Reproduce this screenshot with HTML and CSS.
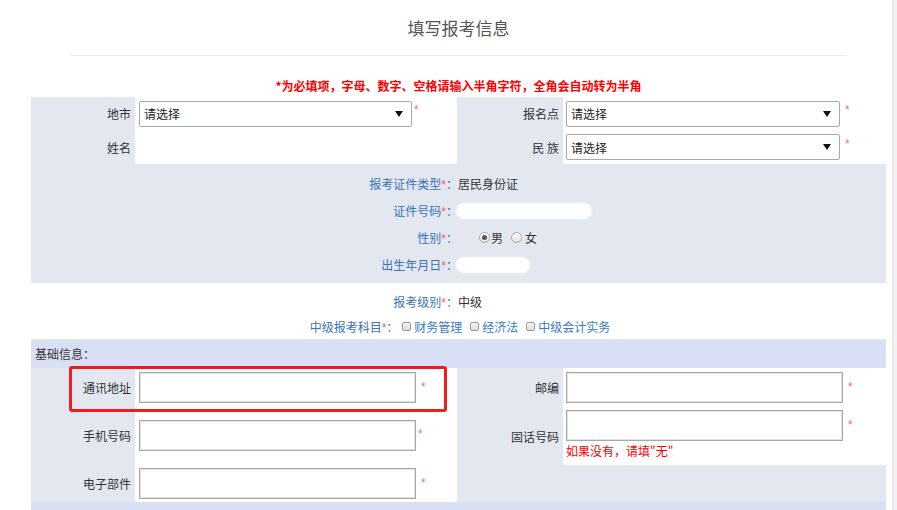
FILE: index.html
```html
<!DOCTYPE html>
<html lang="zh-CN">
<head>
<meta charset="utf-8">
<title>填写报考信息</title>
<link rel="stylesheet" href="styles.css">
</head>
<body>
<div class="layout">
  <main class="page">
    <div class="sheet">
      <h1 class="title">填写报考信息</h1>
      <div class="rule"></div>
      <p class="notice">*为必填项，字母、数字、空格请输入半角字符，全角会自动转为半角</p>

      <div class="grid-top">
        <div class="lab">地市</div>
        <div class="val val-l"><div class="select"><span>请选择</span><svg class="arrow" width="8" height="6" viewBox="0 0 8 6"><path d="M0 0H8L4 6Z" fill="#111"/></svg></div><span class="star star-tight">*</span></div>
        <div class="lab">报名点</div>
        <div class="val val-r"><div class="select"><span>请选择</span><svg class="arrow" width="8" height="6" viewBox="0 0 8 6"><path d="M0 0H8L4 6Z" fill="#111"/></svg></div><span class="star">*</span></div>
        <div class="lab">姓名</div>
        <div class="val val-l"></div>
        <div class="lab">民 族</div>
        <div class="val val-r"><div class="select"><span>请选择</span><svg class="arrow" width="8" height="6" viewBox="0 0 8 6"><path d="M0 0H8L4 6Z" fill="#111"/></svg></div><span class="star">*</span></div>
      </div>

      <div class="id-block">
        <div class="pair"><div class="k">报考证件类型<span class="req">*</span>：</div><div class="v">居民身份证</div></div>
        <div class="pair"><div class="k">证件号码<span class="req">*</span>：</div><div class="v"><span class="mask mask-id"></span></div></div>
        <div class="pair"><div class="k">性别<span class="req">*</span>：</div><div class="v"><span class="radio checked"></span><span class="opt">男</span><span class="radio radio-2"></span><span class="opt">女</span></div></div>
        <div class="pair"><div class="k">出生年月日<span class="req">*</span>：</div><div class="v"><span class="mask mask-date"></span></div></div>
      </div>

      <div class="level-block">
        <div class="pair pair-s"><div class="k">报考级别<span class="req">*</span>：</div><div class="v">中级</div></div>
        <div class="subjects">
          <span class="k-inline">中级报考科目<span class="req">*</span>：</span>
          <span class="check"></span><span class="subj">财务管理</span>
          <span class="check"></span><span class="subj">经济法</span>
          <span class="check"></span><span class="subj">中级会计实务</span>
        </div>
      </div>

      <div class="section-head">基础信息：</div>

      <div class="basic">
        <div class="half-left">
          <div class="brow brow-a">
            <div class="blab">通讯地址</div>
            <div class="bval"><span class="text-input"></span><span class="star bstar">*</span></div>
          </div>
          <div class="brow brow-b">
            <div class="blab">手机号码</div>
            <div class="bval"><span class="text-input"></span><span class="star bstar star-near">*</span></div>
          </div>
          <div class="brow brow-c">
            <div class="blab">电子部件</div>
            <div class="bval"><span class="text-input"></span><span class="star bstar">*</span></div>
          </div>
        </div>
        <div class="half-right">
          <div class="rlab">邮编</div>
          <div class="rval rval-zip"><span class="text-input"></span><span class="star bstar">*</span></div>
          <div class="rlab">固话号码</div>
          <div class="rval rval-tel">
            <div class="tel-line"><span class="text-input"></span><span class="star bstar">*</span></div>
            <div class="hint">如果没有，请填"无"</div>
          </div>
          <div class="filler"></div>
        </div>
        <div class="highlight"></div>
      </div>

      <div class="section-head section-next"></div>
    </div>
  </main>
  <div class="scrollbar"></div>
</div>
</body>
</html>
```

FILE: styles.css
```css
* { box-sizing: border-box; }
html, body { margin: 0; padding: 0; }
body {
  font-family: "Noto Sans CJK SC", "Liberation Sans", sans-serif;
  font-size: 12px;
  color: #333;
  background: #fff;
}
.layout { display: flex; height: 510px; overflow: hidden; }
.page { width: 892px; flex: none; }
.scrollbar { flex: 1; background: #f1f1f1; border-left: 1px solid #e4e4e4; }
.sheet { margin-left: 31px; width: 855px; }

.title {
  margin: 0;
  padding-top: 16px;
  height: 40px;
  line-height: 24px;
  font-size: 17px;
  font-weight: normal;
  color: #555;
  text-align: center;
}
.rule { margin: 15px 39px 0; height: 1px; background: #ececec; }
.notice {
  margin: 22px 0 3px;
  line-height: 16px;
  height: 16px;
  text-align: center;
  color: #ff0000;
  font-weight: bold;
  font-size: 12px;
}

/* top grid */
.grid-top {
  display: grid;
  grid-template-columns: 104px 322px 106px 323px;
  grid-template-rows: 33px 34px;
}
.lab {
  background: #e3e7ef;
  display: flex;
  align-items: center;
  justify-content: flex-end;
  padding-right: 4px;
}
.val { background: #fff; display: flex; align-items: center; }
.val-l { padding-left: 4px; }
.val-r { padding-left: 3px; }
.select {
  width: 273px;
  height: 26px;
  border: 1px solid #a9a9a9;
  border-radius: 2px;
  display: flex;
  align-items: center;
  justify-content: space-between;
  padding: 0 8px 0 4px;
  background: #fff;
  color: #222;
}
.val-r .select { width: 274px; }
.arrow { display: block; }

.star {
  color: #ff6b6b;
  font-size: 12px;
  line-height: 12px;
  margin-left: 5px;
  margin-bottom: 7px;
  font-family: "Liberation Sans", sans-serif;
}
.star-tight { margin-left: 2px; }
.req { color: #ff5a5a; font-family: "Liberation Sans", sans-serif; }

/* id block */
.id-block { background: #e3e7ef; padding: 6px 0 5px; }
.pair {
  display: grid;
  grid-template-columns: 427px 1fr;
  height: 27px;
  align-items: center;
}
.pair .k { text-align: right; color: #3a74ba; }
.pair .v { color: #333; display: flex; align-items: center; }
.mask {
  display: inline-block;
  height: 14px;
  background: #fff;
  border-radius: 7px;
  box-shadow: 0 0 2px 1px #fff;
  margin-left: -1px;
}
.mask-id { width: 134px; }
.mask-date { width: 72px; }
.radio {
  display: inline-block;
  width: 11px;
  height: 11px;
  border-radius: 50%;
  border: 1px solid #a8a8a8;
  background: linear-gradient(#fdfdfd, #e2e2e2);
  margin-left: 21px;
  margin-right: 1px;
  position: relative;
}
.radio.checked::after {
  content: "";
  position: absolute;
  left: 2px;
  top: 2px;
  width: 5px;
  height: 5px;
  border-radius: 50%;
  background: #555;
}
.radio-2 { margin-left: 8px; margin-right: 3px; }
.opt { color: #333; }

/* level block */
.level-block { background: #fff; padding-top: 6px; border-bottom: 1px solid #e8e8e8; }
.pair-s { height: 25px; }
.subjects {
  height: 25px;
  display: flex;
  align-items: center;
  justify-content: center;
  padding-left: 3px;
}
.k-inline { color: #3a74ba; margin-right: 4px; }
.subj { color: #3a7bc6; margin-right: 8px; }
.subj:last-child { margin-right: 0; }
.check {
  display: inline-block;
  width: 9px;
  height: 9px;
  border: 1px solid #9a9a9a;
  border-radius: 2px;
  background: linear-gradient(#f6f6f6, #dcdcdc);
  margin-right: 3px;
}

.section-head {
  background: #d9e0f6;
  height: 28px;
  line-height: 28px;
  padding-left: 4px;
  color: #333;
}
.section-next { height: 30px; }

/* basic info */
.basic {
  display: grid;
  grid-template-columns: 426px 429px;
  position: relative;
}
.brow { display: grid; grid-template-columns: 104px 322px; }
.brow-a, .brow-b { height: 48px; }
.brow-c { height: 38px; }
.blab {
  background: #e3e7ef;
  text-align: right;
  padding: 4px 4px 0 0;
  line-height: 31px;
}
.bval {
  background: #fff;
  padding: 4px 0 0 4px;
  display: flex;
  align-items: flex-start;
}
.text-input {
  display: block;
  width: 277px;
  height: 31px;
  border: 1px solid #a8a8a8;
  box-shadow: inset 0 0 0 1px #e2e2e2;
  background: #fff;
  flex: none;
}
.bstar { margin-top: 9px; margin-left: 5px; margin-bottom: 0; }
.star-near { margin-left: 2px; margin-top: 8px; }

.half-right {
  display: grid;
  grid-template-columns: 106px 323px;
  grid-template-rows: 39px 58px 37px;
}
.rlab {
  background: #e3e7ef;
  display: flex;
  align-items: center;
  justify-content: flex-end;
  padding-right: 4px;
}
.rval { background: #fff; padding-left: 3px; }
.rval-zip { padding-top: 4px; display: flex; align-items: flex-start; }
.rval-tel { padding-top: 3px; }
.tel-line { display: flex; align-items: flex-start; }
.hint { color: #ff0000; line-height: 16px; margin-top: 2px; }
.filler { grid-column: 1 / span 2; background: #e3e7ef; }

.highlight {
  position: absolute;
  left: 38px;
  top: -2px;
  width: 378px;
  height: 46px;
  border: 3px solid #f41b1b;
  border-radius: 3px;
}
```
